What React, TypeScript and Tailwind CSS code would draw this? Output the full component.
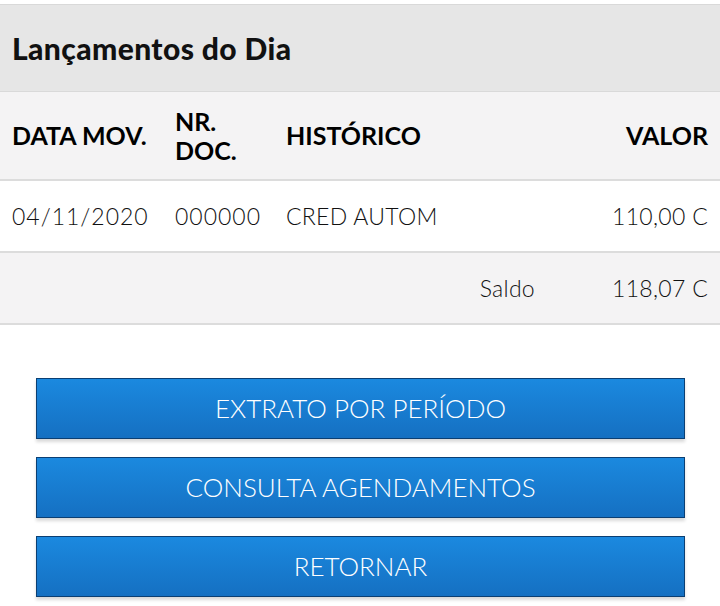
export default function App() {
  const buttons = ["EXTRATO POR PERÍODO", "CONSULTA AGENDAMENTOS", "RETORNAR"];
  return (
    <div className="min-h-screen bg-white pt-1 font-['Lato','Liberation_Sans',sans-serif] text-[#111]">
      {/* cabeçalho */}
      <div className="flex h-[88px] items-center border-y border-[#d9d9d9] bg-[#e6e6e6] px-3">
        <h1 className="text-[30px] font-black tracking-[0.4px]">Lançamentos do Dia</h1>
      </div>

      <table className="w-full border-collapse text-[23px]">
        <thead>
          <tr className="h-[88px] border-b-2 border-[#dcdcdc] bg-[#f4f3f4] text-left text-[25px] font-black leading-[29px] text-black">
            <th className="w-[175px] pl-3">DATA MOV.</th>
            <th className="w-[111px]">
              NR.
              <br />
              DOC.
            </th>
            <th>HISTÓRICO</th>
            <th className="w-[173px] pr-3 text-right">VALOR</th>
          </tr>
        </thead>
        <tbody className="font-light tracking-[0.3px]">
          <tr className="h-[72px] border-b-2 border-[#dcdcdc] bg-white">
            <td className="pl-3 tracking-[1px]">04/11/2020</td>
            <td className="tracking-[1px]">000000</td>
            <td>CRED AUTOM</td>
            <td className="pr-3 text-right">110,00 C</td>
          </tr>
          <tr className="h-[72px] border-b-2 border-[#dcdcdc] bg-[#f4f3f4]">
            <td></td>
            <td></td>
            <td className="pr-3 text-right">Saldo</td>
            <td className="pr-3 text-right">118,07 C</td>
          </tr>
        </tbody>
      </table>

      <div className="mt-[53px] flex flex-col gap-[18px] px-9">
        {buttons.map((b) => (
          <button
            key={b}
            className="h-[61px] w-[649px] border border-[#0b3f73] bg-gradient-to-b from-[#1b89df] to-[#1570c2] text-[26px] font-light text-white shadow-[0_3px_3px_rgba(0,0,0,0.15)]"
          >
            {b}
          </button>
        ))}
      </div>
    </div>
  );
}
